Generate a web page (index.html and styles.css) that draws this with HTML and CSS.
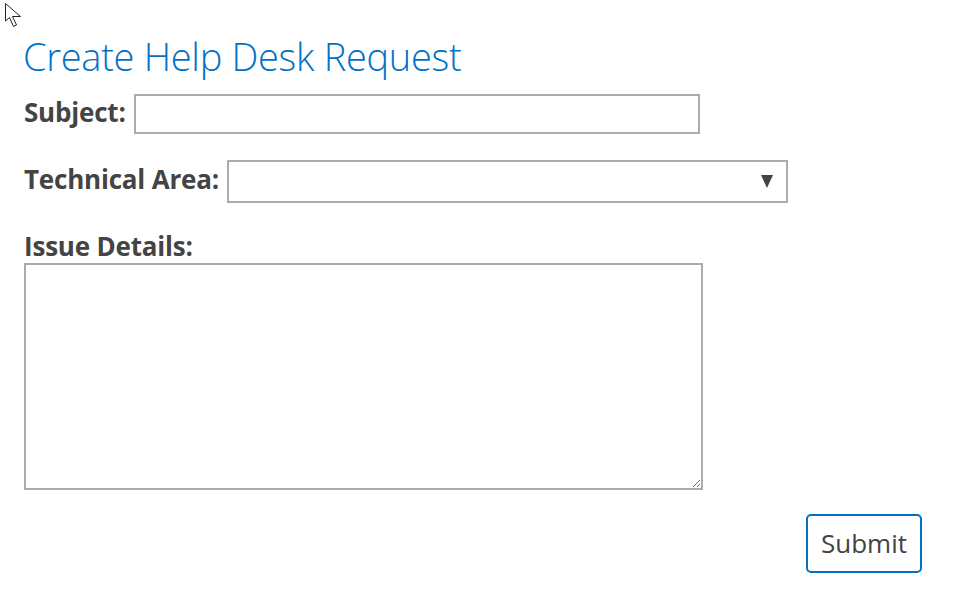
FILE: index.html
```html
<!DOCTYPE html>
<html lang="en">
<head>
<meta charset="utf-8">
<title>Create Help Desk Request</title>
<link rel="stylesheet" href="styles.css">
</head>
<body>
<svg class="cursor" width="20" height="28" viewBox="0 0 20 28" aria-hidden="true">
  <path d="M1.5 1.5 L1.5 19 L5.5 15.5 L9.5 24.5 L12.5 23 L8.5 14.5 L16.5 14.5 Z" fill="#fff" stroke="#222" stroke-width="1" stroke-linejoin="miter"/>
</svg>
<main class="page">
  <h1 class="title">Create Help Desk Request</h1>
  <form class="form">
    <div class="row row-subject">
      <label class="label" for="subject">Subject:</label>
      <input class="field subject" id="subject" type="text">
    </div>
    <div class="row row-area">
      <label class="label" for="area">Technical Area:</label>
      <div class="select-wrap">
        <select class="field select" id="area">
          <option value=""></option>
        </select>
        <svg class="arrow" width="12" height="13" viewBox="0 0 12 13" aria-hidden="true">
          <path d="M0 0 H12 L6 13 Z" fill="#444"/>
        </svg>
      </div>
    </div>
    <div class="stack">
      <label class="label" for="details">Issue Details:</label>
      <textarea class="field details" id="details"></textarea>
    </div>
    <div class="actions">
      <button class="submit" type="button">Submit</button>
    </div>
  </form>
</main>
</body>
</html>
```
FILE: styles.css
```css
html, body {
  margin: 0;
  padding: 0;
  background: #fff;
}
body {
  font-family: "Open Sans", "Noto Sans", "Liberation Sans", sans-serif;
  color: #444;
  position: relative;
  width: 955px;
  height: 604px;
  overflow: hidden;
}
.cursor {
  position: absolute;
  left: 4px;
  top: 2px;
}
.page {
  padding: 28px 33px 0 23px;
}
.title {
  margin: 0;
  font-weight: 300;
  font-size: 38px;
  line-height: 56px;
  color: #0072c6;
  letter-spacing: -0.3px;
}
.form {
  display: flex;
  flex-direction: column;
}
.label {
  font-weight: 700;
  font-size: 26px;
  line-height: 32px;
  color: #444;
  letter-spacing: -0.2px;
}
.row {
  display: flex;
  align-items: center;
  gap: 8px;
}
.row .label {
  padding-bottom: 5px;
}
.row-subject {
  margin-top: 10px;
  padding-left: 1px;
}
.row-area {
  margin-top: 26px;
  padding-left: 1px;
}
.field {
  box-sizing: border-box;
  border: 2px solid #ababab;
  border-radius: 0;
  background: #fff;
  font-family: inherit;
  font-size: 18px;
  color: #444;
  outline: none;
  margin: 0;
}
.subject {
  width: 566px;
  height: 40px;
}
.select-wrap {
  position: relative;
}
.select {
  appearance: none;
  -webkit-appearance: none;
  width: 561px;
  height: 43px;
  display: block;
}
.arrow {
  position: absolute;
  right: 15px;
  top: 15px;
  pointer-events: none;
}
.stack {
  display: flex;
  flex-direction: column;
  margin-top: 27px;
  padding-left: 1px;
}
.details {
  width: 679px;
  height: 227px;
  margin-top: 1px;
  resize: both;
}
.actions {
  display: flex;
  justify-content: flex-end;
  margin-top: 24px;
}
.submit {
  box-sizing: border-box;
  width: 116px;
  height: 59px;
  border: 2px solid #0072c6;
  border-radius: 5px;
  background: #fff;
  font-family: inherit;
  font-size: 26px;
  color: #444;
  padding: 0 0 2px;
}
```
